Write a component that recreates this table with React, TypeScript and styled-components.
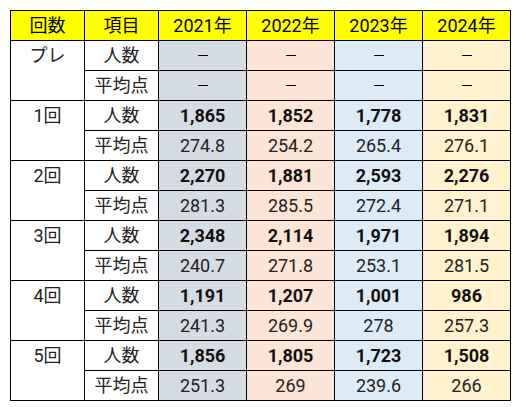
import React from 'react';
import styled, { createGlobalStyle } from 'styled-components';

const GlobalStyle = createGlobalStyle`
  body {
    margin: 0;
    background: #ffffff;
    font-family: Roboto, "Noto Sans CJK JP", sans-serif;
  }
`;

const Page = styled.div`
  padding: 10px;
`;

const Table = styled.div`
  display: grid;
  grid-template-columns: 74px 74px 88px 88px 88px 88px;
  grid-auto-rows: 30px;
  width: max-content;
  border-top: 1px solid #000;
  border-left: 1px solid #000;
`;

const Cell = styled.div<{ $bg?: string; $bold?: boolean; $span?: number }>`
  box-sizing: border-box;
  display: flex;
  align-items: center;
  justify-content: center;
  border-right: 1px solid #000;
  border-bottom: 1px solid #000;
  background: ${(p) => p.$bg || '#ffffff'};
  font-size: 18px;
  font-weight: ${(p) => (p.$bold ? 700 : 400)};
  color: ${(p) => (p.$bold ? '#111' : '#222')};
  line-height: 1;
  grid-row: ${(p) => (p.$span ? `span ${p.$span}` : 'auto')};
`;

const HeaderCell = styled(Cell)`
  background: #ffff00;
  color: #000;
`;

const GroupCell = styled(Cell)`
  align-items: flex-start;
  padding-top: 6px;
`;

const Dash = styled.span`
  display: block;
  width: 10px;
  height: 1px;
  background: #000;
`;

const colors = ['#d6dce4', '#fce4d6', '#ddebf7', '#fff2cc'];

const groups = [
  { name: 'プレ', count: ['', '', '', ''], avg: ['', '', '', ''] },
  { name: '1回', count: ['1,865', '1,852', '1,778', '1,831'], avg: ['274.8', '254.2', '265.4', '276.1'] },
  { name: '2回', count: ['2,270', '1,881', '2,593', '2,276'], avg: ['281.3', '285.5', '272.4', '271.1'] },
  { name: '3回', count: ['2,348', '2,114', '1,971', '1,894'], avg: ['240.7', '271.8', '253.1', '281.5'] },
  { name: '4回', count: ['1,191', '1,207', '1,001', '986'], avg: ['241.3', '269.9', '278', '257.3'] },
  { name: '5回', count: ['1,856', '1,805', '1,723', '1,508'], avg: ['251.3', '269', '239.6', '266'] },
];

const App: React.FC = () => {
  return (
    <Page>
      <GlobalStyle />
      <Table>
        <HeaderCell>回数</HeaderCell>
        <HeaderCell>項目</HeaderCell>
        <HeaderCell>2021年</HeaderCell>
        <HeaderCell>2022年</HeaderCell>
        <HeaderCell>2023年</HeaderCell>
        <HeaderCell>2024年</HeaderCell>

        {groups.map((g) => (
          <React.Fragment key={g.name}>
            <GroupCell $span={2}>{g.name}</GroupCell>
            <Cell>人数</Cell>
            {g.count.map((v, i) => (
              <Cell key={`c${i}`} $bg={colors[i]} $bold>
                {v || <Dash />}
              </Cell>
            ))}
            <Cell>平均点</Cell>
            {g.avg.map((v, i) => (
              <Cell key={`a${i}`} $bg={colors[i]}>
                {v || <Dash />}
              </Cell>
            ))}
          </React.Fragment>
        ))}
      </Table>
    </Page>
  );
};

export default App;
